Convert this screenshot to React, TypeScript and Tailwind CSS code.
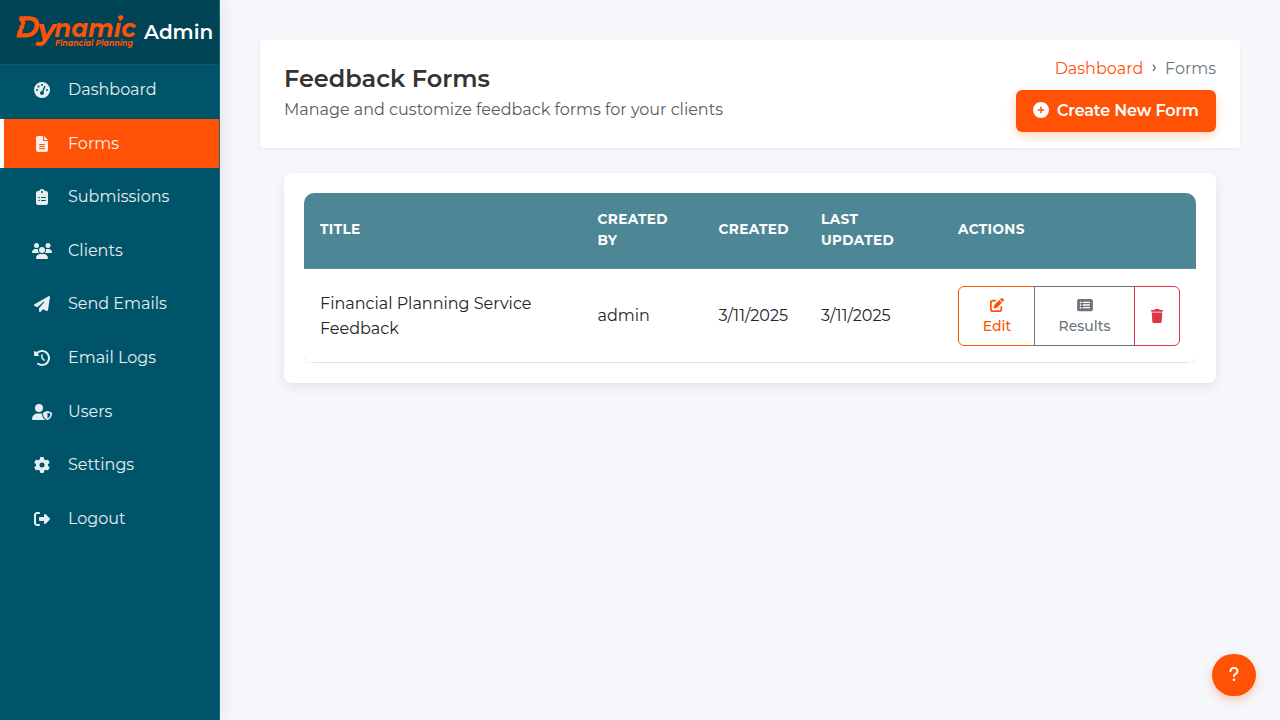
import type { IconType } from 'react-icons';
import {
  FaCirclePlus,
  FaClipboardList,
  FaClockRotateLeft,
  FaFileLines,
  FaGaugeHigh,
  FaGear,
  FaPaperPlane,
  FaPenToSquare,
  FaQuestion,
  FaRectangleList,
  FaRightFromBracket,
  FaTrash,
  FaUserShield,
  FaUsers,
} from 'react-icons/fa6';

const navItems: { label: string; icon: IconType; active?: boolean; wide?: boolean }[] = [
  { label: 'Dashboard', icon: FaGaugeHigh },
  { label: 'Forms', icon: FaFileLines, active: true },
  { label: 'Submissions', icon: FaClipboardList },
  { label: 'Clients', icon: FaUsers, wide: true },
  { label: 'Send Emails', icon: FaPaperPlane },
  { label: 'Email Logs', icon: FaClockRotateLeft },
  { label: 'Users', icon: FaUserShield, wide: true },
  { label: 'Settings', icon: FaGear },
  { label: 'Logout', icon: FaRightFromBracket },
];

function Logo() {
  return (
    <svg
      viewBox="0 0 120 34"
      fill="#ff5207"
      fontFamily="Montserrat, sans-serif"
      fontStyle="italic"
      className="h-[34px] w-[120px] shrink-0 overflow-visible"
    >
      <path
        fillRule="evenodd"
        d="M3.800 1.200H13C20 1.200 24.200 4.800 23.300 11C22.300 18.200 17 22.400 9.500 22.400H0.300L1.800 15.800L3.600 13.500L3.200 11.300L5.200 9.300L4.800 7L2.800 4.800ZM8.600 5.400L9.600 8L8.300 10.300L8.600 12.200L6.900 14.300L6 18.200H10.300C14.700 18.200 17.900 15.500 18.500 11.200C19 7.400 17 5.400 12.800 5.400Z"
      />
      <text x="21.500" y="25" fontWeight="700" fontSize="29" textLength="18" lengthAdjust="spacingAndGlyphs">
        y
      </text>
      <text x="38.200" y="22.400" fontWeight="700" fontSize="26" textLength="81.500" lengthAdjust="spacingAndGlyphs">
        namıc
      </text>
      <path d="M102 1.200C104 -0.200 107.500 0.200 107.400 2.200C107.200 4.200 105 5.800 102.600 6.600C103.800 5 103.800 4.200 102.400 4Z" />
      <text x="39" y="30.700" fontWeight="700" fontSize="8" textLength="78" lengthAdjust="spacingAndGlyphs">
        Financial Planning
      </text>
    </svg>
  );
}

function Sidebar() {
  return (
    <aside className="relative flex h-full w-[220px] shrink-0 flex-col border-r border-[#1f677d] bg-[#00546a] shadow-[2px_0_20px_rgba(0,0,0,0.08)]">
      <div className="flex h-[65px] items-center gap-2 border-b border-[#1a5465] bg-[#004355] pl-4">
        <Logo />
        <span className="text-xl font-semibold text-white">Admin</span>
      </div>
      <nav className="flex flex-col gap-1 pt-[0.25px]">
        {navItems.map(({ label, icon: Icon, active, wide }) => (
          <a
            key={label}
            className={
              active
                ? 'flex h-[49.6px] items-center border-l-4 border-white bg-[#ff5207] pl-7 text-white/90'
                : 'flex h-[49.6px] items-center border-l-4 border-transparent pl-7 text-white/90'
            }
          >
            <span className="mr-4 flex w-5 justify-center">
              <Icon className={wide ? 'h-4 w-5' : 'size-4'} />
            </span>
            <span>{label}</span>
          </a>
        ))}
      </nav>
    </aside>
  );
}

function PageHeader() {
  return (
    <header className="flex h-[108px] justify-between rounded bg-white px-6 shadow-[0_2px_4px_rgba(0,0,0,0.05)]">
      <div className="pt-6">
        <h1 className="text-2xl leading-[29px] font-semibold text-[#333]">Feedback Forms</h1>
        <p className="mt-1 leading-[25.6px] text-[#5a5c60]">Manage and customize feedback forms for your clients</p>
      </div>
      <div className="flex flex-col items-end pt-4">
        <div className="flex leading-[25.6px]">
          <span className="text-[#ff5207]">Dashboard</span>
          <span className="-mt-0.5 px-[8.5px] text-[#333]">›</span>
          <span className="text-[#6c757d]">Forms</span>
        </div>
        <button className="mt-2 flex h-[42px] w-[200px] items-center gap-2 rounded-md bg-[#ff5207] pl-[17px] font-semibold tracking-[-0.15px] whitespace-nowrap text-white shadow-[0_4px_10px_rgba(255,82,7,0.25)]">
          <FaCirclePlus className="mb-px size-4" />
          Create New Form
        </button>
      </div>
    </header>
  );
}

const columns = 'grid grid-cols-[277.5px_121px_102.5px_137px_1fr] items-center *:px-4';

function FormsTable() {
  return (
    <section className="mx-6 mt-[25px] h-[210px] rounded-lg bg-white p-5 shadow-[0_4px_12px_rgba(0,0,0,0.08)]">
      <div className={`${columns} h-[76px] rounded-t-[10px] border-b border-[#5c90a0] bg-[#4d8796] pb-0.5 text-[13.6px] leading-[21px] font-bold tracking-[0.4px] text-white`}>
        <div>TITLE</div>
        <div>CREATED BY</div>
        <div>CREATED</div>
        <div>LAST UPDATED</div>
        <div>ACTIONS</div>
      </div>
      <div className="bg-[#f7f8f9]">
        <div className="overflow-hidden rounded-b-[10px] bg-white">
          <div className={`${columns} h-[94px] border-b border-[#dee2e6] leading-[25px] text-[#212529]`}>
            <div>Financial Planning Service Feedback</div>
            <div>admin</div>
            <div>3/11/2025</div>
            <div>3/11/2025</div>
            <div className="flex text-sm leading-[21px] font-medium">
              <button className="flex h-[60px] w-[77px] flex-col items-center justify-center rounded-l-md border border-[#ff5207] pl-px text-[#ff5207]">
                <span className="flex h-[21px] items-center">
                  <FaPenToSquare className="size-3.5" />
                </span>
                Edit
              </button>
              <button className="-ml-px flex h-[60px] w-[101px] flex-col items-center justify-center border border-[#6c757d] text-[#6c757d]">
                <span className="flex h-[21px] items-center">
                  <FaRectangleList className="h-3.5 w-4" />
                </span>
                Results
              </button>
              <button className="-ml-px flex h-[60px] w-[46px] items-center justify-center rounded-r-md border border-[#dc3545] text-[#dc3545]">
                <FaTrash className="size-3.5" />
              </button>
            </div>
          </div>
        </div>
      </div>
    </section>
  );
}

export default function App() {
  return (
    <div className="relative flex h-[720px] w-[1280px] overflow-hidden bg-[#f5f7fb] font-['Montserrat',sans-serif] text-base">
      <Sidebar />
      <main className="flex-1 p-10">
        <PageHeader />
        <FormsTable />
      </main>
      <button className="absolute right-6 bottom-6 flex h-[42px] w-11 items-center justify-center rounded-full bg-[#ff5207] text-white shadow-[0_4px_10px_rgba(255,82,7,0.3)]">
        <FaQuestion className="mb-0.5 size-4" />
      </button>
    </div>
  );
}
